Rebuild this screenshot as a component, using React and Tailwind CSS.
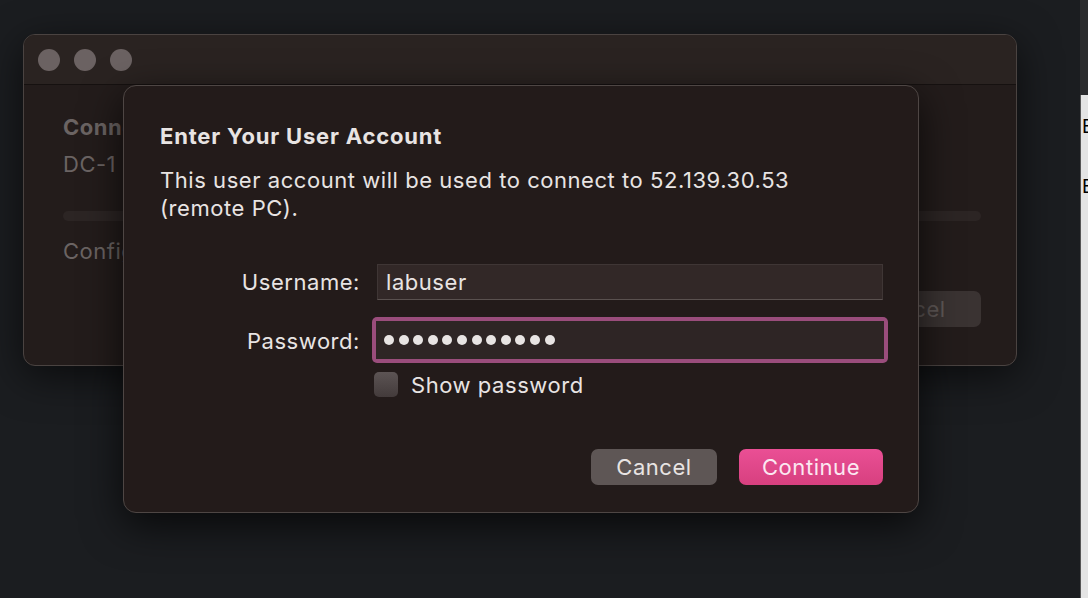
import React from "react";

export default function App() {
  return (
    <div
      className="relative w-[1088px] h-[598px] overflow-hidden bg-[#1b1d20]"
      style={{ fontFamily: "Inter, 'Noto Sans', sans-serif" }}
    >
      {/* right edge strip of another window */}
      <div className="absolute left-[1080px] top-0 w-[8px] h-[598px] bg-[#2a2b2d] overflow-hidden pt-[95px]">
        <div className="h-[503px] border-l border-[#555] bg-[#e4e4e4] text-black text-[19px] leading-none pt-[22px] flex flex-col">
          <div className="ml-[1px]">E</div>
          <div className="mt-[41px] ml-[1px]">E</div>
        </div>
      </div>

      {/* background window */}
      <div className="absolute left-[23px] top-[34px] w-[994px] h-[332px] rounded-[12px] border border-[#4a4341] bg-[#231c1b] shadow-[0_10px_40px_rgba(0,0,0,0.6)] overflow-hidden">
        <div className="h-[50px] bg-[#2a2321] border-b border-[#161110] flex items-center gap-[14px] pl-[14px]">
          <div className="w-[22px] h-[22px] rounded-full bg-[#6b6262]" />
          <div className="w-[22px] h-[22px] rounded-full bg-[#6b6262]" />
          <div className="w-[22px] h-[22px] rounded-full bg-[#6b6262]" />
        </div>
        <div className="pl-[39px] pr-[35px] pt-[28px] text-[#6b6463] text-[22px] tracking-[0.5px]">
          <div className="font-bold leading-[28px]">Connection</div>
          <div className="leading-[28px] mt-[9px]">DC-1</div>
          <div className="mt-[33px] h-[10px] rounded-full bg-[#2c2524]" />
          <div className="mt-[16px] leading-[28px]">Configuring</div>
          <div className="flex justify-end mt-[26px]">
            <div className="w-[146px] h-[36px] rounded-[7px] bg-[#3a3332] flex items-center justify-center text-[#5f5857]">
              Cancel
            </div>
          </div>
        </div>
      </div>

      {/* dialog */}
      <div className="absolute left-[123px] top-[85px] w-[796px] h-[428px] rounded-[13px] border border-[#4e4644] bg-[#231b1a] shadow-[0_12px_40px_rgba(0,0,0,0.7)] pl-[36px] pr-[35px] pt-[36px] text-[22px] tracking-[0.55px] text-[#e8e4e3]">
        <div className="font-bold leading-[28px] tracking-[0.8px]">
          Enter Your User Account
        </div>
        <div className="mt-[16px] leading-[28px]">
          This user account will be used to connect to 52.139.30.53
          <br />
          (remote PC).
        </div>

        <div className="mt-[42px] grid grid-cols-[200px_1fr] gap-x-[17px] items-center">
          <div className="text-right leading-[28px]">Username:</div>
          <div className="h-[36px] bg-[#322827] border border-[#3f3635] border-b-[#5a514f] flex items-center pl-[8px]">
            labuser
          </div>

          <div className="mt-[18px] text-right leading-[28px]">Password:</div>
          <div className="mt-[17px] -ml-[5px] -mr-[5px] h-[46px] rounded-[5px] bg-[#9a4d7c] p-[4px]">
            <div className="h-full bg-[#2e2525] flex items-center pl-[8px] gap-[4.6px]">
              {Array.from({ length: 12 }).map((_, i) => (
                <div key={i} className="w-[10px] h-[10px] rounded-full bg-[#e8e4e3]" />
              ))}
            </div>
          </div>

          <div />
          <div className="mt-[9px] -ml-[3px] flex items-center gap-[13px]">
            <div className="w-[24px] h-[25px] rounded-[5px] bg-gradient-to-b from-[#5c5454] to-[#433b3b]" />
            <div className="leading-[24px]">Show password</div>
          </div>
        </div>

        <div className="mt-[52px] flex justify-end gap-[22px]">
          <div className="w-[126px] h-[36px] rounded-[7px] bg-[#5e5655] flex items-center justify-center">
            Cancel
          </div>
          <div className="w-[144px] h-[36px] rounded-[7px] bg-gradient-to-b from-[#ea4f95] to-[#d7407f] flex items-center justify-center text-[#fbe8f1]">
            Continue
          </div>
        </div>
      </div>
    </div>
  );
}
